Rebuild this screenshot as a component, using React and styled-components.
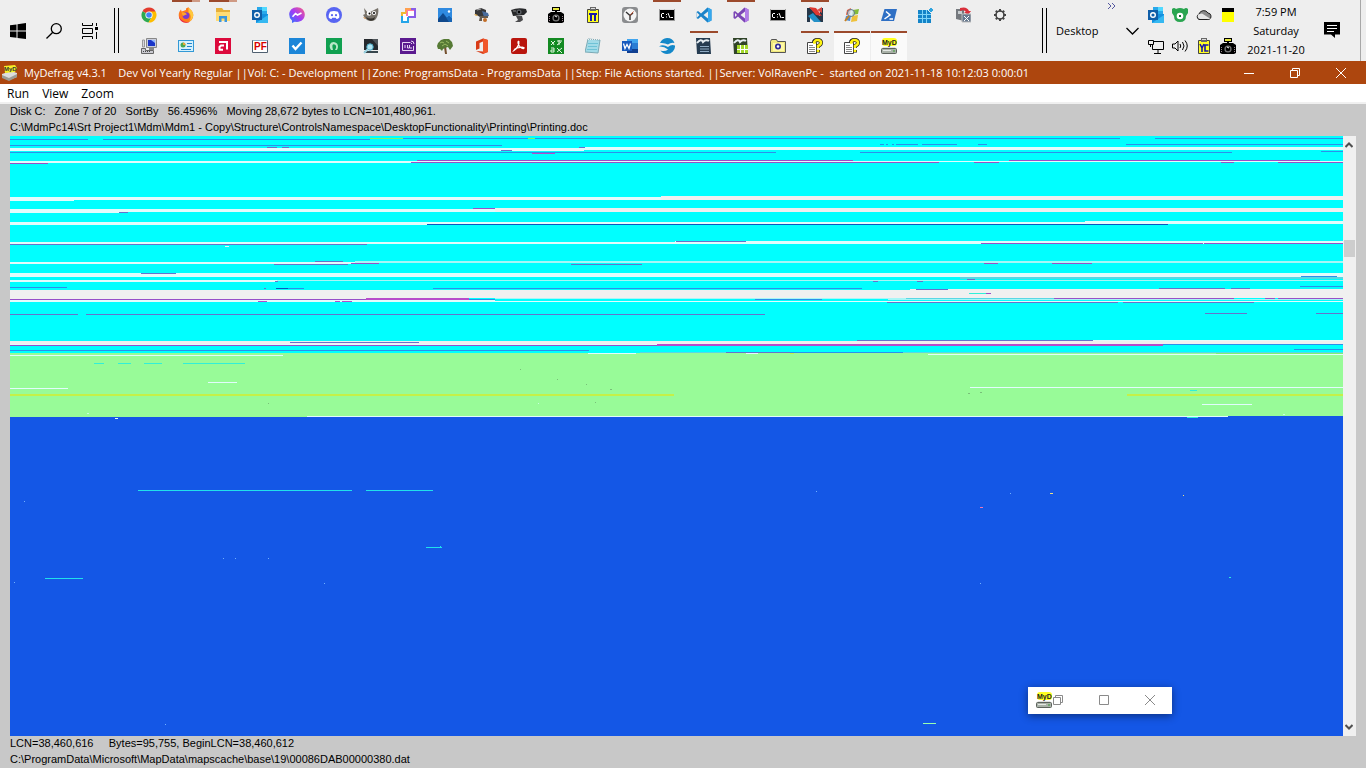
import React from 'react';
import styled, { createGlobalStyle } from 'styled-components';

const GlobalStyle = createGlobalStyle`
  * { box-sizing: border-box; }
  body { margin: 0; background: #c8c8c8; font-family: "Open Sans", "Noto Sans", sans-serif; }
  button { margin: 0; padding: 0; border: 0; background: transparent; font: inherit; color: inherit; }
  svg { display: block; flex: none; }
`;

const Desktop = styled.div`
  display: flex;
  flex-direction: column;
  min-height: 100vh;
`;

/* ---------- Task bar ---------- */
const TaskBar = styled.header`
  display: flex;
  align-items: stretch;
  height: 61px;
  background: #eeeeee;
  color: #000;
  font-size: 11px;
`;
const SystemButtons = styled.div`
  display: flex;
  align-items: center;
`;
const SystemButton = styled.button`
  display: flex;
  align-items: center;
  justify-content: center;
  width: 36px;
  height: 60px;
`;
const Grip = styled.div`
  width: 5px;
  margin: 8px 0 8px ${p => p.$gap}px;
  border: solid #000;
  border-width: 0 1px;
`;
const Launcher = styled.nav`
  flex: 1;
  margin-left: 12px;
  min-width: 0;
`;
const LauncherRow = styled.div`
  display: flex;
  gap: 1px;
  height: 31px;
`;
const AppButton = styled.button`
  display: flex;
  align-items: center;
  justify-content: center;
  position: relative;
  width: 36px;
  height: 30px;
  background: ${p => (p.$open ? '#fafafa' : 'transparent')};
  &::before {
    content: '';
    position: absolute;
    top: 0;
    left: ${p => (p.$open ? 0 : 4)}px;
    right: ${p => (p.$open ? 0 : 4)}px;
    height: 2px;
    background: ${p => (p.$running ? '#9c4a2c' : 'transparent')};
    border-right: ${p => (p.$stack ? '8px solid #cf9a84' : '0')};
  }
`;
const Toolbar = styled.div`
  display: flex;
  align-items: center;
  position: relative;
  padding-left: 9px;
  width: 97px;
`;
const Overflow = styled.button`
  position: absolute;
  top: 2px;
  right: 28px;
`;
const ToolbarArrow = styled.button`
  margin-left: auto;
  padding: 4px 5px;
`;
const Tray = styled.div`
  display: grid;
  grid-template-columns: repeat(4, 24px);
  grid-template-rows: 31px 30px;
`;
const TrayButton = styled.button`
  display: flex;
  align-items: center;
  justify-content: center;
  height: 30px;
`;
const Clock = styled.time`
  display: flex;
  flex-direction: column;
  width: 72px;
  padding-top: 2px;
  text-align: center;
  line-height: 19px;
`;
const NotifyButton = styled(SystemButton)`
  width: 40px;
`;
const ShowDesktop = styled.button`
  width: 14px;
  display: flex;
  justify-content: flex-end;
  &::after {
    content: '';
    width: 5px;
    height: 61px;
    border-left: 1px solid #a8a8a8;
  }
`;

/* ---------- Application window ---------- */
const Window = styled.main`
  flex: 1;
  display: flex;
  flex-direction: column;
  background: #c8c8c8;
`;
const TitleBar = styled.div`
  display: flex;
  align-items: center;
  height: 23px;
  padding: 0 2px;
  background: #ad460e;
  color: #fff;
`;
const Title = styled.h1`
  flex: 1;
  margin: 0 0 0 6px;
  font-size: 11px;
  font-weight: 400;
  line-height: 23px;
  white-space: pre;
  overflow: hidden;
`;
const CaptionButton = styled.button`
  display: flex;
  align-items: center;
  justify-content: center;
  width: 46px;
  height: 20px;
`;
const MenuBar = styled.nav`
  display: flex;
  gap: 13px;
  height: 20px;
  padding: 0 7px;
  background: #fff;
  border-bottom: 2px solid #f0f0f0;
  font-size: 12px;
  line-height: 19px;
`;
const Info = styled.div`
  height: 32px;
  padding-left: 10px;
  color: #000;
  font: 11px/14px "Liberation Sans", Arial, sans-serif;
  white-space: pre;
  overflow: hidden;
`;
const InfoLine = styled.p`
  margin: 0;
  padding-bottom: 2px;
`;
const MapPanel = styled.section`
  flex: 1;
  display: flex;
  position: relative;
  min-height: 400px;
  margin: 0 10px;
`;
const MapSvg = styled.svg`
  flex: 1;
  width: 0;
  align-self: stretch;
`;
const ScrollBar = styled.div`
  display: flex;
  flex-direction: column;
  width: 13px;
  padding-left: 1px;
  background: #f0f0f0;
`;
const ScrollButton = styled.button`
  display: flex;
  align-items: center;
  justify-content: center;
  width: 10px;
  height: 18px;
`;
const ScrollTrack = styled.div`
  flex: 1;
  display: grid;
  grid-template-rows: 157fr 17px 843fr;
`;
const ScrollThumb = styled.div`
  grid-row: 2;
  width: 11px;
  background: #cdcdcd;
`;
const MiniWindow = styled.div`
  position: absolute;
  right: 184px;
  bottom: 22px;
  display: flex;
  align-items: center;
  width: 144px;
  height: 27px;
  padding: 0 17px 1px 8px;
  background: #fff;
  box-shadow: 0 2px 8px rgba(0, 0, 0, 0.45);
`;
const MiniControls = styled.div`
  flex: 1;
  display: flex;
  justify-content: space-between;
  margin-left: 1px;
`;
const MiniButton = styled.button`
  color: #8a8a8a;
`;

/* ---------- Icons ---------- */
const Pic = ({ children, size = 16, w = size, h = size }) => (
  <svg width={w} height={h} viewBox={`0 0 ${w} ${h}`} aria-hidden="true">{children}</svg>
);
const sans = '"Liberation Sans", Arial, sans-serif';
const Word = ({ x, y, s, fill = '#fff', children }) => (
  <text x={x} y={y} fontSize={s} fontWeight="700" fontFamily={sans} fill={fill}>{children}</text>
);

const Chrome = () => (
  <Pic>
    <path d="M8 8 1.500 4.200A7.500 7.500 0 0 1 14.600 4.500z" fill="#e33b2e" />
    <path d="M8 8 1.500 4.200A7.500 7.500 0 0 0 7.400 15.500L11 10z" fill="#2da94f" />
    <path d="M8 4.500H14.600A7.500 7.500 0 0 1 7.400 15.500L11 10z" fill="#fdbd00" />
    <circle cx="8" cy="8" r="3.600" fill="#fff" /><circle cx="8" cy="8" r="2.800" fill="#4285f4" />
  </Pic>
);
const Firefox = () => (
  <Pic>
    <path d="M8 1.500C10 1 10 0 10.500.5c1 1.500 4.800 3.500 4.800 7.800A7.300 7.300 0 0 1 8 15.700 7.300 7.300 0 0 1 .7 8.300C.7 5.500 2 3.500 3 2.500l.6 2L8 3z" fill="#ff7a1c" />
    <path d="M10.500.5c1 1.500 4.800 3.500 4.800 7.800-.3 3-2 5-4 6.300 2-3 2-7-.8-9z" fill="#ffc93c" />
    <path d="M.8 9a7.300 7.300 0 0 0 11 5.700C8 16 3 14 .8 9z" fill="#e8264f" />
    <circle cx="8" cy="8.600" r="3.400" fill="#7a3bd0" /><path d="M3.500 5.500C6 5 8 6 9 7.500 7 7.500 6 9 4.800 9z" fill="#ffa52a" />
  </Pic>
);
const Explorer = () => (
  <Pic>
    <path d="M1 1h6l1.500 2H15v10H1z" fill="#e7b03a" /><path d="M1 5h14v9H1z" fill="#ffdc75" />
    <path d="M4 15V9h8v6h-2.500v-3.500h-3V15z" fill="#3a96dd" />
  </Pic>
);
const Outlook = () => (
  <Pic>
    <path d="M5 0h10v9H5z" fill="#28a8ea" /><path d="M10 0h5v4h-5z" fill="#50d9ff" /><path d="M4 7h12v9H4z" fill="#1490df" />
    <path d="m4 16 12-8v8z" fill="#35b8f1" /><path d="M0 3h10v10H0z" fill="#0f5ea8" />
    <circle cx="5" cy="8" r="2.300" fill="none" stroke="#fff" strokeWidth="1.400" />
  </Pic>
);
const Messenger = () => (
  <Pic>
    <defs><linearGradient id="msg" x1="0" y1="1" x2="1" y2="0"><stop stopColor="#1f7bff" /><stop offset=".5" stopColor="#a33cf5" /><stop offset="1" stopColor="#ff5f7e" /></linearGradient></defs>
    <path d="M8 .3c4.500 0 7.800 3.200 7.800 7.300S12.500 15 8 15l-2.400-.3L3 16v-2.500A7.200 7.200 0 0 1 .2 7.600C.2 3.500 3.500.3 8 .3z" fill="url(#msg)" />
    <path d="m3.500 9.800 3-3.300 2 1.500 4-2" fill="none" stroke="#fff" strokeWidth="1.600" />
  </Pic>
);
const Discord = () => (
  <Pic>
    <circle cx="8" cy="8" r="8" fill="#5865f2" />
    <path d="M4 4.800Q8 3.300 12 4.800q1.500 2.700 1.300 5.700Q12 12 10.500 12l-.8-1.200H6.300L5.500 12Q4 12 2.700 10.500 2.500 7.500 4 4.800z" fill="#fff" />
    <circle cx="6" cy="8.200" r="1.100" fill="#5865f2" /><circle cx="10" cy="8.200" r="1.100" fill="#5865f2" />
  </Pic>
);
const Gimp = () => (
  <Pic>
    <path d="M1 1l4 5 4-2 6-3c1 3 0 9-3 12-4 2-8 1-10-2L0 8l2-1z" fill="#77726a" />
    <circle cx="6" cy="6.500" r="2.300" fill="#fff" /><circle cx="11" cy="6" r="2" fill="#fff" /><circle cx="6.500" cy="6.500" r="1" /><circle cx="11" cy="6" r="1" />
    <path d="M3 10q5 3 9 0l-1 3q-4 2-7-1z" fill="#35322d" /><path d="m0 10 3 1-1 1z" fill="#d08030" />
  </Pic>
);
const ScreenCap = () => (
  <Pic>
    <path d="M6 1h9v9H9v5H1V6h5z" fill="#fff" />
    <path d="M7 9V3h7" fill="none" stroke="#ff7aab" strokeWidth="2" /><path d="M6 2h9v8H8" fill="none" stroke="#8a5de8" strokeWidth="2" />
    <path d="M6 6V2h5" fill="none" stroke="#ffa050" strokeWidth="2" /><path d="M2 15V6h4" fill="none" stroke="#f0b832" strokeWidth="2" /><path d="M2 9v6h6v-5" fill="none" stroke="#25a5e8" strokeWidth="2" />
  </Pic>
);
const Photos = () => (
  <Pic><path d="M1 1h14v14H1z" fill="#2f8ae0" /><path d="m1 12 5-6 4 5 2-2 3 3v3H1z" fill="#10498c" /><path d="m6 6 4 5 2-2 3 3v3h-3z" fill="#1764b4" /><circle cx="12" cy="4.500" r="1.200" fill="#fff" /></Pic>
);
const Projector = () => (
  <Pic>
    <path d="M1 3l6-2 5 2v6l-6 1-5-3z" fill="#38383a" /><path d="M0 7l4 1-2 1z" fill="#e0a030" /><path d="m8 4 6 2 1 3-5 1z" fill="#486b9c" />
    <path d="M6 9h8v2H8v3H5z" fill="#655b50" /><circle cx="11" cy="13" r="2" fill="#c26d28" /><path d="m3 3 4-1" stroke="#aaa" />
  </Pic>
);
const Webcam = () => (
  <Pic><path d="M0 3q7-3 15-1l1 3-3 3-11 1z" fill="#27282a" /><circle cx="8" cy="5" r="2.600" fill="#5a5e63" /><circle cx="8" cy="5" r="1.200" /><path d="M5 9h6l1 4-3 2H4l3-2z" fill="#4a4a4c" /><path d="M2 4h3" stroke="#8a8a8a" /></Pic>
);
const Camera = () => (
  <Pic>
    <path d="M4 0h8v4H4z" /><path d="M5 1h6v2H5z" fill="#e8e840" /><path d="M7 4h2v2H7zM0 7l3-2h10l3 2v8l-2 1H2l-2-1z" />
    <circle cx="8" cy="11" r="3.600" fill="#777" /><circle cx="8" cy="11" r="2.300" /><path d="M7 9l2 1" stroke="#fff" /><path d="M1.500 9v5M14.500 9v5" stroke="#9a8790" strokeDasharray="1 1" />
  </Pic>
);
const PiPad = () => (
  <Pic><path d="M2.500 2.500h11v13h-11z" fill="#ffff20" stroke="#444" /><path d="M5 0h6v4H5z" fill="#686868" /><path d="M6 1h4v1H6z" fill="#ddd" /><path d="M4 7h8M6 7v7M10 7v7" stroke="#1818a8" strokeWidth="2" /></Pic>
);
const VcPad = () => (
  <Pic><path d="M2.500 2.500h11v13h-11z" fill="#ffff20" stroke="#444" /><path d="M5 0h6v4H5z" fill="#686868" /><path d="M6 1h4v1H6z" fill="#ddd" /><path d="m4 6 2 4v4M8 6l-2 4M12.500 7H9v6h3.500" fill="none" stroke="#1818a8" strokeWidth="1.600" /></Pic>
);
const ClockIcon = () => (
  <Pic><rect width="16" height="16" rx="3" fill="#8a8c8e" /><circle cx="8" cy="8" r="6.500" fill="#f4f4f4" /><path d="m4 5 4 3.500V13M8 8.500 11 6" fill="none" stroke="#333" strokeWidth="1.400" /><path d="m8 8.500 3.500-4" stroke="#c05030" /></Pic>
);
const Cmd = () => (
  <Pic><path d="M.5 2.500h15v11H.5z" fill="#000" stroke="#999" /><path d="M1 2.500h14" stroke="#ddd" /><path d="M5 6.500H3L2.500 7v3l.5.500h2M7.500 7v1M7.500 9.500v1M9 6l2 5M11.500 10.500H14" fill="none" stroke="#fff" /></Pic>
);
const VsCode = () => (
  <Pic><path d="m11.500.5 4 2v11l-4 2L5 9.500 2 12 .5 11V5L2 4l3 2.500z" fill="#1b83c9" /><path d="M12 4.500 7.500 8l4.500 3.500z" fill="#eee" /><path d="M.5 5 3.500 8l-3 3z" fill="#eee" /><path d="M12 .7l3.500 1.800v11L12 15.300z" fill="#35a8ee" /></Pic>
);
const VisualStudio = () => (
  <Pic><path d="m11.500.5 4 2v11l-4 2L5 9.500 2 12 .5 11V5L2 4l3 2.500z" fill="#7a45b5" /><path d="M12 4.500 7.500 8l4.500 3.500zM2 6v4l2-2z" fill="#eee" /><path d="M12 .7l3.500 1.800v11L12 15.300z" fill="#b17be8" /></Pic>
);
const NotePlus = () => (
  <Pic><path d="M0 1h3l10 8V1h3v14h-4L3 8v7H0z" fill="#263749" /><path d="m2 0 7 1 6 8-6-1z" fill="#de3830" /><path d="m1 9 5-3 8 9H7z" fill="#2390c7" /><path d="m10 3 5-3v6z" fill="#d84a43" /></Pic>
);
const WinFlag = () => (
  <Pic><path d="m3 3 4-2-1 6-4 1z" fill="#e5593c" /><path d="m9 3 6-1-1 5-6 1z" fill="#84bb38" /><path d="m2 9 5-1-1 6-5-1z" fill="#4d8bd0" /><path d="m8 9 6-1-1 6-6 1z" fill="#efc13a" /><circle cx="7" cy="6" r="3.500" fill="#d7edf8" fillOpacity=".7" stroke="#5f7787" /><path d="m5 9-4 5" stroke="#c98020" strokeWidth="2" /></Pic>
);
const PowerShell = () => (
  <Pic><path d="M3.500 2H16l-3 12H0z" fill="#2e6fc4" /><path d="m5 4.500 4 3.500-5.500 4M8.500 12H12" fill="none" stroke="#fff" strokeWidth="1.500" /></Pic>
);
const Registry = () => (
  <Pic><path d="M0 3h13v13H0z" fill="#1484c8" /><path d="M4.500 3v13M8.500 3v13M0 7.500h13M0 11.500h13" stroke="#7fd4f8" /><path d="m13 0 3 3-3 3-3-3z" fill="#30a4df" stroke="#eee" /></Pic>
);
const DiskTool = () => (
  <Pic><path d="M1 2h8v12l-8-2z" fill="#75797e" /><path d="M3 4h4v3H3z" fill="#c8cdd0" /><path d="M5 1q7-2 9 3h2l-3 4-4-3h2Q9 2 5 4z" fill="#d92f3b" /><path d="M7 7h9v8H7z" fill="#66788e" stroke="#bbb" /><path d="m9 9 5 5m0-5-5 5" stroke="#fff" /></Pic>
);
const Gear = () => (
  <Pic><g stroke="#444" fill="none"><circle cx="8" cy="8" r="4" strokeWidth="1.600" /><path d="M8 2v2.500M8 11.500V14M2 8h2.500M11.500 8H14M3.800 3.800l1.600 1.600M10.600 10.600l1.600 1.600M12.200 3.800l-1.600 1.600M5.400 10.600l-1.600 1.600" strokeWidth="2" /></g></Pic>
);
const Computer = () => (
  <Pic><path d="M5.500.500h10v9h-10z" fill="#c9cddc" stroke="#888" /><path d="M7 2h7v6H7z" fill="#1a35c8" /><path d="m10 2 4 3V2z" fill="#91b8ff" /><path d="M8 10h5v2H8z" fill="#888" /><path d="M.5 10.500h4v2h8v3H.5z" fill="#cbcbd2" stroke="#666" /><path d="M2 13.500h8" stroke="#444" strokeDasharray="1 1" /><path d="M1.500 2h2v7h-2z" fill="#d8d8e0" stroke="#999" /></Pic>
);
const Card = () => (
  <Pic><path d="M0 2h16v12H0z" fill="#3299d6" /><path d="M1 3h14v10H1z" fill="#d5f0fc" /><circle cx="5" cy="7" r="2.500" fill="#46a853" /><path d="M5 7V4.500A2.500 2.500 0 0 1 7.500 7z" fill="#f0a530" /><path d="M9 5.500h5M9 8.500h5M3 11.500h10" stroke="#2485cc" /></Pic>
);
const Amd = () => (
  <Pic><path d="M0 0h16v16H0z" fill="#dc0a3c" /><path d="M4 4h8v7.500M4 11.800h4M9 7.500H6L4.500 9v3" fill="none" stroke="#fff" strokeWidth="2" /></Pic>
);
const Pf = () => (
  <Pic><path d="M.5 2.500h15v12H.5z" fill="#fff" stroke="#506070" /><path d="M1 2.500h14" stroke="#90b0c8" /><Word x={2} y={12} s={10} fill="#d90000">PF</Word></Pic>
);
const Todo = () => (
  <Pic><path d="M0 0h16v16H0z" fill="#1c86d8" /><path d="m3.500 7.500 3 3.500L12.500 4.500" fill="none" stroke="#fff" strokeWidth="2.400" /></Pic>
);
const GreenArc = () => (
  <Pic><path d="M0 0h16v16H0z" fill="#10a050" /><path d="M5 12Q2 7 5.500 4.500q3-1.500 5.500 1 2 3 0 6.500H9q2-3 .5-5-2-1.500-3 0Q6 9 7 12z" fill="#b9e8c7" /></Pic>
);
const FindPc = () => (
  <Pic><path d="M1 1h14v11H1z" fill="#25292d" /><path d="M9 1h6v7z" fill="#50565b" /><path d="M1 13h14v2H1z" fill="#37464c" /><circle cx="7" cy="9" r="3.200" fill="#b2e3f0" stroke="#49a9c4" /><path d="m5 11-4 4" stroke="#9bd3e2" strokeWidth="2" /></Pic>
);
const Rufus = () => (
  <Pic><path d="M0 0h16v16H0z" fill="#5b1a8f" /><path d="M2.500 4.500h8M13.500 8v4.500h-11v-8M5 7v3M7.500 7v3h2V7M12 10H10" fill="none" stroke="#e7d6f3" /><path d="M11 3q3 0 3 3M11 5l1 1" stroke="#e7d6f3" fill="none" /></Pic>
);
const Tree = () => (
  <Pic><path d="m7 9 1 7h2L9 8z" fill="#74502e" /><path d="M1 5l3-3 3-1 5 0 3 3 1 4-3 4-2-3-3 1-2 1-1 2-2-2-2 0-1-3z" fill="#567a35" /><path d="m3 5 2-1 2 1m2-2 3 2M5 8l3-2 3 2" stroke="#9abb63" fill="none" /></Pic>
);
const Office = () => (
  <Pic><path d="m2 3.500 7-3 5 1.500v12l-5 2-7-3 7 .6V3.500L5.500 5v5.500L2 12z" fill="#d83b16" /><path d="m9 .5 5 1.500v12l-5 1.500z" fill="#f0562a" /></Pic>
);
const Acrobat = () => (
  <Pic><rect width="16" height="16" rx="2" fill="#b9150d" /><path d="M3 12.500C6 11 8.500 6 7.800 3.500 7 2.500 6.500 5 8 7.500s4.500 4 5 2.500-7-.5-9 1z" fill="none" stroke="#fff" strokeWidth="1.300" /></Pic>
);
const Translate = () => (
  <Pic><path d="M0 0h16v16H0z" fill="#138a22" /><path d="m3 3 2 2 2-2M3 7l2-2 1 2M9 3h5M11 2v5M9 7l4-3M3 10h3v4H3v-2h3M9 10l5 5m0-5-5 4" fill="none" stroke="#e2f5df" /></Pic>
);
const Notepad = () => (
  <Pic><path d="m3 1 12 1-2 13L0 14z" fill="#a2dbe8" stroke="#7ba9b5" /><path d="M3 1.500h11" stroke="#eee" strokeDasharray="1 1" /><path d="M3 5.500h10M3 8.500h9M2 11.500h10" stroke="#6fc2d6" /></Pic>
);
const WordDoc = () => (
  <Pic><path d="M5 1h11v14H5z" fill="#2b7cd3" /><path d="M5 1h11v4H5z" fill="#41a5ee" /><path d="M5 11h11v4H5z" fill="#103f91" /><path d="M0 3h10v10H0z" fill="#185abd" /><path d="m1.500 5.500 1.500 5L5 6.500l2 4 1.500-5" fill="none" stroke="#fff" strokeWidth="1.300" /></Pic>
);
const OpenOffice = () => (
  <Pic><path d="M8 0a8 8 0 0 1 7.500 5Q12 4 9 6.500 5.500 4.500 1 5A8 8 0 0 1 8 0zM0 8.500Q4 6 9 9q3.500-3 7-1.500A8 8 0 0 1 8 16a8 8 0 0 1-6.500-3.500Q6 14 9 11.500 5 8 0 8.500z" fill="#1488c9" /></Pic>
);
const Writer = () => (
  <Pic><path d="M0 0h14l1 16H1z" fill="#263c51" /><path d="M1 5Q5 0 7 4q3-3 6-1" fill="none" stroke="#e6edf2" strokeWidth="2" /><path d="M4 8.500h9M4 11h9M4 13.500h9" stroke="#8eaac3" /></Pic>
);
const Calc = () => (
  <Pic><path d="M0 0h14l1 16H1z" fill="#304328" /><path d="M1 5Q5 0 7 4q3-3 6-1" fill="none" stroke="#e6edf2" strokeWidth="2" /><path d="M4 7h11v8H4z" fill="#a3d82a" /><path d="M7.500 7v8M11.500 7v8M4 11.500h11" stroke="#fff" /></Pic>
);
const CamFolder = () => (
  <Pic><path d="M.5 3.500l1-2h5l1 2h8v11H.5z" fill="#efe77d" stroke="#555" /><path d="M3 5h11v8H3z" fill="#fff9a5" /><circle cx="8" cy="8.500" r="3" fill="#302b9a" /><circle cx="8" cy="8.500" r="1.300" fill="#fff" /></Pic>
);
const HelpDoc = () => (
  <Pic><path d="M.5 4.500h9v11h-9z" fill="#fff" stroke="#444" /><path d="M2 7.500h4M2 9.500h6M2 11.500h6M2 13.500h6" stroke="#888" /><path d="M7 4.500Q7 2 10.500 2q3.500 0 3.500 2.800 0 2-3 3.200v2M11 12v2.500" fill="none" stroke="#222" strokeWidth="4" /><path d="M6 4.500h1.500Q7.500 2 10.500 2q3.500 0 3.500 2.800 0 2-3 3.200v2M11 11.800V14" fill="none" stroke="#fff410" strokeWidth="2.600" /></Pic>
);
const MyD = () => (
  <Pic><rect x="1" width="15" height="8" rx="3" fill="#ffff20" /><Word x={1} y={7} s={7} fill="#222">MyD</Word><path d="m2 9h12l2 3H0z" fill="#dedede" /><rect x=".5" y="10.500" width="15" height="5" rx="1" fill="#a9b1a8" stroke="#5c625c" /><path d="M2 12.500h8" stroke="#e4e8e4" /><path d="M12 13h2" stroke="#3d9a36" /></Pic>
);
const TitleIcon = () => (
  <Pic><path d="M0 9l9-3 6 2v4l-8 3-7-3z" fill="#ddd" /><path d="m0 10 7 3 8-4v3l-8 4-7-3z" fill="#9c9c96" /><path d="m2 1 11-1 2 3-2 4-10 1z" fill="#f5ee25" /><Word x={2} y={6} s={6} fill="#333">MyD</Word></Pic>
);
const Bear = () => (
  <Pic><path d="M0 2q2-2 4 0 4-2 8 0 2-2 4 0v4l-2 3q0 6-6 6t-6-6L0 6z" fill="#2aa550" /><circle cx="8" cy="9" r="3.300" fill="#fff" /><path d="M7 8h2v2H7z" fill="#156a30" /></Pic>
);
const Cloud = () => (
  <Pic><path d="M3 12.500a3 3 0 0 1 0-5.500 5 5 0 0 1 9-1 3.400 3.400 0 0 1 1 6.500z" fill="#8b8b8b" stroke="#222" /><path d="m2 7.500 4-1 8 5q-1 1-3 .5H4Q1 11 2 7.500z" fill="#e7e7e7" /></Pic>
);
const YellowNote = () => <Pic><path d="M2 1h12v14H2z" fill="#ffff00" /><path d="M2 1h12v4H2z" fill="#000" /></Pic>;
const Network = () => (
  <Pic><path d="M5 3.500h10.500v8H4.500V7M10 12v3M6 15.500h7M.5 2.500h5v4h-5zM2.500 7v2" fill="none" stroke="#000" /></Pic>
);
const Speaker = () => (
  <Pic><path d="M.5 6v4h2.500l3 3V3L3 6zM8 6q1.500 2 0 4M10.500 4q3 4 0 8M13 2.500q4.500 5.500 0 11" fill="none" stroke="#000" /></Pic>
);

const topApps = [
  ['Chrome', Chrome], ['Firefox', Firefox, 'stack'], ['File Explorer', Explorer, 'stack'], ['Outlook', Outlook],
  ['Messenger', Messenger], ['Discord', Discord], ['GIMP', Gimp], ['Screen capture', ScreenCap], ['Photos', Photos],
  ['Projector', Projector], ['Webcam', Webcam], ['Camera', Camera], ['Clipboard', PiPad], ['Clock', ClockIcon],
  ['Command Prompt', Cmd, 'run'], ['VS Code', VsCode], ['Visual Studio', VisualStudio, 'run'], ['Console', Cmd],
  ['Notes', NotePlus, 'run'], ['Windows tools', WinFlag], ['PowerShell', PowerShell], ['Registry', Registry],
  ['Disk tool', DiskTool], ['Settings', Gear],
];
const bottomApps = [
  ['Computer', Computer], ['Control Panel', Card], ['AMD', Amd], ['PF', Pf], ['To Do', Todo], ['Green', GreenArc],
  ['Find', FindPc], ['Run', Rufus], ['Tree', Tree], ['Office', Office], ['Acrobat', Acrobat], ['Translate', Translate],
  ['Notepad', Notepad], ['Word', WordDoc], ['OpenOffice', OpenOffice], ['Writer', Writer, 'run'], ['Calc', Calc],
  ['Pictures', CamFolder], ['Help', HelpDoc, 'run'], ['Help window', HelpDoc, 'open'], ['MyDefrag', MyD, 'open'],
];
const trayItems = [
  ['Outlook', Outlook], ['Bear', Bear], ['OneDrive', Cloud], ['Note', YellowNote],
  ['Network', Network], ['Volume', Speaker], ['Clipboard', VcPad], ['Camera', Camera],
];

const Apps = ({ items }) => (
  <LauncherRow>
    {items.map(([name, Glyph, state]) => (
      <AppButton key={name} aria-label={name} $running={!!state} $stack={state === 'stack'} $open={state === 'open'}>
        <Glyph />
      </AppButton>
    ))}
  </LauncherRow>
);

/* ---------- Disk map: colour -> [x, y, width, height] runs ---------- */
const layers = [
  ['#00ffff', [[0, 0, 1333, 217]]],
  ['#98fb98', [[0, 217, 1333, 64]]],
  ['#1457e6', [[0, 281, 1333, 319], [1218, 280, 115, 1]]],
  ['#e2fcfc', [
    [0, 12, 574, 3], [574, 11, 759, 3], [0, 25, 1333, 1], [0, 26, 401, 1], [0, 61, 651, 3], [0, 64, 64, 1],
    [0, 73, 485, 3], [0, 76, 109, 1], [0, 86, 1333, 2], [0, 88, 417, 1], [1075, 85, 258, 1],
    [0, 106, 1333, 2], [665, 105, 668, 1], [215, 110, 4, 1], [0, 126, 345, 2], [0, 137, 1333, 4], [0, 144, 267, 2],
    [0, 164, 485, 2], [485, 165, 848, 1], [0, 205, 1333, 4], [1083, 204, 250, 2], [0, 219, 273, 1], [578, 217, 48, 1],
    [736, 217, 12, 1], [918, 218, 415, 1], [198, 246, 29, 1], [0, 252, 58, 1], [960, 251, 373, 1],
    [1192, 268, 50, 1], [297, 280, 921, 1], [105, 282, 3, 1],
  ]],
  ['#f0f0f0', [[651, 60, 682, 4], [485, 72, 848, 4], [0, 154, 1333, 8], [0, 162, 356, 2], [900, 153, 433, 1], [0, 205, 1333, 3]]],
  ['#a8f6f6', [[345, 125, 988, 2], [267, 144, 1066, 1], [485, 162, 560, 1], [878, 163, 455, 1]]],
  ['#58d8e4', [[950, 141, 383, 2], [630, 216, 703, 1], [896, 162, 148, 1]]],
  ['#2c90ea', [
    [0, 3, 78, 1], [93, 3, 267, 1], [393, 2, 125, 1], [525, 2, 585, 1], [1145, 2, 188, 1],
    [0, 9, 492, 1], [0, 16, 766, 1], [850, 16, 372, 1], [912, 8, 35, 1], [870, 8, 4, 1], [876, 8, 2, 1], [882, 8, 2, 1],
    [886, 8, 22, 1], [968, 8, 9, 1], [1116, 8, 217, 1], [1311, 15, 22, 1], [1291, 140, 36, 1], [1290, 150, 43, 1],
    [0, 151, 57, 1], [276, 152, 18, 1], [423, 152, 429, 1], [459, 163, 26, 1], [745, 163, 67, 1],
    [0, 214, 579, 1], [1284, 213, 49, 1], [1153, 208, 180, 1], [780, 216, 113, 1],
  ]],
  ['#6672cc', [
    [257, 11, 10, 1], [272, 11, 7, 1], [491, 14, 11, 1], [569, 11, 6, 1], [109, 76, 9, 1], [0, 108, 357, 1],
    [666, 105, 70, 1], [305, 125, 28, 1], [264, 128, 74, 1], [561, 128, 71, 1], [131, 137, 35, 1], [957, 143, 8, 1],
    [265, 145, 3, 1], [863, 145, 5, 1], [907, 145, 6, 1], [254, 152, 2, 1], [1149, 152, 66, 1], [1221, 152, 19, 1],
    [906, 153, 32, 1], [877, 166, 231, 1], [1113, 166, 131, 1], [0, 178, 68, 1], [76, 178, 679, 1],
    [1195, 177, 42, 1], [1306, 177, 27, 1], [280, 206, 129, 1], [847, 204, 236, 1], [716, 216, 64, 1],
  ]],
  ['#9850c8', [
    [407, 24, 436, 1], [999, 24, 311, 1], [401, 26, 528, 1], [964, 26, 25, 1], [1211, 26, 13, 1], [1268, 26, 65, 1],
    [0, 27, 38, 1], [463, 72, 22, 1], [971, 107, 222, 1], [1194, 107, 139, 1], [341, 127, 28, 1], [974, 127, 14, 1],
    [1042, 127, 40, 1], [0, 163, 356, 1], [1044, 162, 180, 1], [1255, 162, 10, 1], [1268, 162, 65, 1], [976, 157, 5, 1],
    [0, 209, 647, 1],
  ]],
  ['#b84cca', [[522, 17, 23, 1], [356, 162, 103, 2], [647, 208, 506, 2], [248, 165, 9, 1], [325, 165, 5, 1], [332, 165, 10, 1]]],
  ['#0a58c0', [[417, 88, 741, 1], [266, 152, 12, 1]]],
  ['#80f070', [[360, 2, 33, 1], [518, 2, 7, 1], [1206, 217, 127, 1]]],
  ['#c4f048', [[0, 258, 664, 1], [0, 259, 664, 1], [1117, 258, 216, 2], [780, 217, 4, 1]]],
  ['#30f0d8', [
    [84, 227, 10, 1], [108, 227, 13, 1], [134, 227, 18, 1], [173, 227, 62, 1], [1180, 254, 7, 1], [959, 157, 17, 1],
    [1177, 281, 11, 1], [1219, 441, 2, 1],
  ]],
  ['#20e0ec', [[128, 354, 214, 1], [356, 354, 67, 1], [35, 442, 38, 1], [416, 411, 16, 1], [430, 410, 1, 1]]],
  ['#78c078', [[510, 233, 1, 1], [547, 243, 1, 1], [576, 248, 1, 1], [600, 253, 2, 1], [585, 266, 1, 1], [958, 257, 2, 1], [970, 256, 2, 1], [258, 267, 1, 1]]],
  ['#c8ffe0', [[77, 277, 2, 1], [528, 267, 1, 1], [1273, 278, 2, 1]]],
  ['#98ffb0', [[913, 587, 13, 1]]],
  ['#f0e080', [[1040, 357, 3, 1], [1173, 359, 1, 1]]],
  ['#e878b8', [[970, 371, 3, 1]]],
  ['#70b0ff', [
    [14, 365, 1, 1], [806, 355, 1, 1], [1000, 357, 1, 1], [213, 422, 1, 1], [225, 422, 1, 1], [258, 422, 1, 1],
    [4, 446, 1, 1], [314, 447, 1, 1], [970, 447, 1, 1], [155, 588, 1, 1],
  ]],
];

const DiskMap = () => (
  <MapSvg viewBox="0 0 1333 600" preserveAspectRatio="none" shapeRendering="crispEdges" role="img" aria-label="Disk map">
    {layers.map(([color, runs]) => (
      <path key={color} fill={color} d={runs.map(([x, y, w, h]) => `M${x} ${y}h${w}v${h}h${-w}z`).join('')} />
    ))}
  </MapSvg>
);

const RestoreGlyph = () => (
  <Pic size={10}><path d="M.5 2.500h7v7h-7zM2.500 2.500v-2h7v7h-2" fill="none" stroke="currentColor" /></Pic>
);
const CloseGlyph = () => (
  <Pic size={10}><path d="m0 0 10 10m0-10-10 10" fill="none" stroke="currentColor" /></Pic>
);

export default function App() {
  return (
    <Desktop>
      <GlobalStyle />
      <TaskBar>
        <SystemButtons>
          <SystemButton aria-label="Start">
            <Pic><path d="m0 2.300 6.500-.9v6.200H0zM7.500 1.200 16 0v7.600H7.500zM0 8.600h6.500v6.200L0 13.900zM7.500 8.600H16V16l-8.500-1.100z" /></Pic>
          </SystemButton>
          <SystemButton aria-label="Search">
            <Pic><g fill="none" stroke="#000" strokeWidth="1.300"><circle cx="10.300" cy="5.700" r="5" /><path d="M6.800 9.200.5 15.500" /></g></Pic>
          </SystemButton>
          <SystemButton aria-label="Task View">
            <Pic><path d="M.5 0v2.500h10V0M.5 16v-2.500h10V16M.5 5.500h10v5H.5zM14.500 0v3M14.500 9v7" fill="none" stroke="#000" /><path d="M13 4h3v3h-3z" /></Pic>
          </SystemButton>
        </SystemButtons>
        <Grip $gap={6} />
        <Launcher aria-label="Task bar">
          <Apps items={topApps} />
          <Apps items={bottomApps} />
        </Launcher>
        <Grip $gap={0} />
        <Toolbar>
          Desktop
          <Overflow aria-label="More">
            <Pic w={9} h={8}><path d="m1 1 3 3-3 3M5 1l3 3-3 3" fill="none" stroke="#5558a0" /></Pic>
          </Overflow>
          <ToolbarArrow aria-label="Expand">
            <Pic w={13} h={8}><path d="m.5 1 6 6 6-6" fill="none" stroke="#000" strokeWidth="1.300" /></Pic>
          </ToolbarArrow>
        </Toolbar>
        <Tray>
          {trayItems.map(([name, Glyph], i) => (
            <TrayButton key={i} aria-label={name}><Glyph /></TrayButton>
          ))}
        </Tray>
        <Clock dateTime="2021-11-20T19:59">
          <span>7:59 PM</span>
          <span>Saturday</span>
          <span>2021-11-20</span>
        </Clock>
        <NotifyButton aria-label="Notifications">
          <Pic><path d="M0 0h16v12.500h-5V16l-4-3.500H0z" /><path d="M3 3.500h10M3 6.500h10M3 9.500h7" stroke="#fff" /></Pic>
        </NotifyButton>
        <ShowDesktop aria-label="Show desktop" />
      </TaskBar>

      <Window>
        <TitleBar>
          <TitleIcon />
          <Title>{'MyDefrag v4.3.1    Dev Vol Yearly Regular ||Vol: C: - Development ||Zone: ProgramsData - ProgramsData ||Step: File Actions started. ||Server: VolRavenPc -  started on 2021-11-18 10:12:03 0:00:01'}</Title>
          <CaptionButton aria-label="Minimize"><Pic size={10}><path d="M0 5.500h10" stroke="currentColor" /></Pic></CaptionButton>
          <CaptionButton aria-label="Restore"><RestoreGlyph /></CaptionButton>
          <CaptionButton aria-label="Close"><CloseGlyph /></CaptionButton>
        </TitleBar>
        <MenuBar>
          <button>Run</button>
          <button>View</button>
          <button>Zoom</button>
        </MenuBar>
        <Info>
          <InfoLine>{'Disk C:   Zone 7 of 20   SortBy   56.4596%   Moving 28,672 bytes to LCN=101,480,961.'}</InfoLine>
          <InfoLine>{'C:\\MdmPc14\\Srt Project1\\Mdm\\Mdm1 - Copy\\Structure\\ControlsNamespace\\DesktopFunctionality\\Printing\\Printing.doc'}</InfoLine>
        </Info>
        <MapPanel>
          <DiskMap />
          <ScrollBar>
            <ScrollButton aria-label="Scroll up"><Pic w={8} h={6}><path d="m.5 5 3.500-3.500L7.500 5" fill="none" stroke="#505050" strokeWidth="2" /></Pic></ScrollButton>
            <ScrollTrack><ScrollThumb /></ScrollTrack>
            <ScrollButton aria-label="Scroll down"><Pic w={8} h={6}><path d="M.5 1 4 4.500 7.500 1" fill="none" stroke="#505050" strokeWidth="2" /></Pic></ScrollButton>
          </ScrollBar>
          <MiniWindow>
            <MyD />
            <MiniControls>
              <MiniButton aria-label="Restore window"><RestoreGlyph /></MiniButton>
              <MiniButton aria-label="Maximize window"><Pic size={10}><path d="M.5.500h9v9h-9z" fill="none" stroke="currentColor" /></Pic></MiniButton>
              <MiniButton aria-label="Close window"><CloseGlyph /></MiniButton>
            </MiniControls>
          </MiniWindow>
        </MapPanel>
        <Info>
          <InfoLine>{'LCN=38,460,616     Bytes=95,755, BeginLCN=38,460,612'}</InfoLine>
          <InfoLine>{'C:\\ProgramData\\Microsoft\\MapData\\mapscache\\base\\19\\00086DAB00000380.dat'}</InfoLine>
        </Info>
      </Window>
    </Desktop>
  );
}
